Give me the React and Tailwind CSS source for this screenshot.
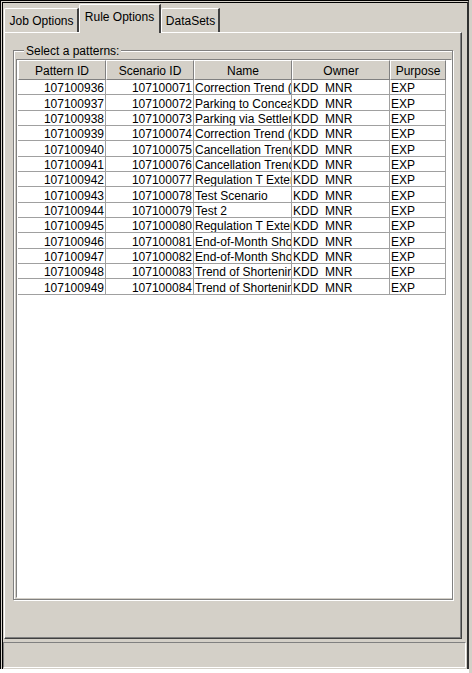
const rows = [
  ["107100936", "107100071", "Correction Trend (Short)", "KDD_MNR", "EXP"],
  ["107100937", "107100072", "Parking to Conceal Ownership", "KDD_MNR", "EXP"],
  ["107100938", "107100073", "Parking via Settlement", "KDD_MNR", "EXP"],
  ["107100939", "107100074", "Correction Trend (Long)", "KDD_MNR", "EXP"],
  ["107100940", "107100075", "Cancellation Trend", "KDD_MNR", "EXP"],
  ["107100941", "107100076", "Cancellation Trend", "KDD_MNR", "EXP"],
  ["107100942", "107100077", "Regulation T Extension", "KDD_MNR", "EXP"],
  ["107100943", "107100078", "Test Scenario", "KDD_MNR", "EXP"],
  ["107100944", "107100079", "Test 2", "KDD_MNR", "EXP"],
  ["107100945", "107100080", "Regulation T Extension", "KDD_MNR", "EXP"],
  ["107100946", "107100081", "End-of-Month Short", "KDD_MNR", "EXP"],
  ["107100947", "107100082", "End-of-Month Short", "KDD_MNR", "EXP"],
  ["107100948", "107100083", "Trend of Shortening", "KDD_MNR", "EXP"],
  ["107100949", "107100084", "Trend of Shortening", "KDD_MNR", "EXP"],
];

const columns = [
  { label: "Pattern ID", width: "w-[88px]", cell: "justify-end pr-[1px]" },
  { label: "Scenario ID", width: "w-[88px]", cell: "justify-end pr-[1px]" },
  { label: "Name", width: "w-[98px]", cell: "justify-start pl-[1px]" },
  { label: "Owner", width: "w-[98px]", cell: "justify-start pl-[1px]" },
  { label: "Purpose", width: "w-[56px]", cell: "justify-start pl-[1px]" },
];

function Tab({ label, width, selected }) {
  if (selected) {
    return (
      <div
        className={`${width} h-[29px] -mb-px relative z-10 bg-[#d4d0c8] border-t border-l border-white border-r-2 border-r-[#404040] rounded-tl-[2px] flex justify-center pt-[5px]`}
      >
        {label}
      </div>
    );
  }
  return (
    <div
      className={`${width} h-[24px] bg-[#d4d0c8] border-t border-l border-white border-r-2 border-r-[#404040] rounded-tl-[2px] flex justify-center pt-[5px] pl-[1px]`}
    >
      {label}
    </div>
  );
}

export default function App() {
  return (
    <div className="w-[472px] h-[673px] bg-white flex overflow-hidden text-[12px] leading-[14px] text-black font-['Liberation_Sans',Arial,sans-serif]">
      <div className="w-[469px] h-[669px] bg-[#d4d0c8] border-t-[3px] border-l-[3px] border-double border-black border-r-2 border-r-[#303030] flex flex-col">
        <div className="h-[29px] flex items-end pl-[1px]">
          <Tab label="Job Options" width="w-[75px]" />
          <Tab label="Rule Options" width="w-[82px]" selected />
          <Tab label="DataSets" width="w-[59px]" />
        </div>

        <div className="ml-[1px] w-[458px] h-[607px] border-t border-l border-white border-r border-b border-r-[#404040] border-b-[#404040] shadow-[inset_-1px_-1px_0_#808080] pt-[17px] pl-[8px]">
          <div className="relative w-[440px] h-[550px] border border-[#808080] shadow-[inset_1px_1px_0_#fff,1px_1px_0_#fff] pt-[8px] pl-[2px] pb-[1px] flex flex-col">
            <span className="absolute -top-[7px] left-[10px] px-[2px] bg-[#d4d0c8]">
              Select a patterns:
            </span>
            <div className="flex-1 border-t border-l border-[#808080] border-b border-r border-b-white border-r-white bg-white pl-[1px]">
              <div className="flex h-[20px]">
                {columns.map((c) => (
                  <div
                    key={c.label}
                    className={`${c.width} bg-[#d4d0c8] border-t border-l border-white border-r border-b border-r-[#808080] border-b-[#808080] flex items-center justify-center pt-px`}
                  >
                    {c.label}
                  </div>
                ))}
              </div>
              {rows.map((r) => (
                <div key={r[0]} className="flex h-[15.35px]">
                  {r.map((v, i) => (
                    <div
                      key={i}
                      className={`${columns[i].width} ${columns[i].cell} flex items-end overflow-hidden whitespace-nowrap border-r border-b border-[#a0a0a0] leading-[11px]`}
                    >
                      {v}
                    </div>
                  ))}
                </div>
              ))}
            </div>
          </div>
        </div>

        <div className="mt-[3px] w-[463px] h-[26px] border-t border-l border-[#808080] border-b border-r border-b-white border-r-white" />
      </div>
      <div className="flex-1 bg-[#d4d0c8]" />
    </div>
  );
}
